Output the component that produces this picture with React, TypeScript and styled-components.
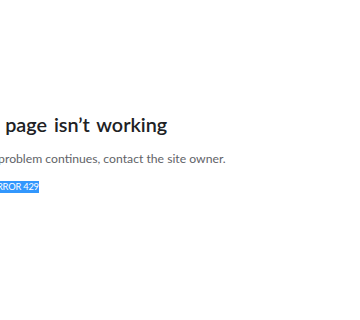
import React from "react";
import styled, { createGlobalStyle } from "styled-components";

const GlobalStyle = createGlobalStyle`
  html, body {
    margin: 0;
    padding: 0;
    background: #ffffff;
    overflow: hidden;
  }
  body {
    font-family: Lato, "Noto Sans", sans-serif;
    width: 360px;
    height: 320px;
  }
`;

const Page = styled.div`
  width: 360px;
  height: 320px;
  overflow: hidden;
  padding-top: 112px;
  box-sizing: border-box;
`;

const Content = styled.div`
  display: flex;
  flex-direction: column;
  align-items: flex-start;
  margin-left: -38px;
  width: 420px;
`;

const Title = styled.h1`
  margin: 0;
  font-size: 19.8px;
  line-height: 25px;
  font-weight: 600;
  word-spacing: 2px;
  color: #202124;
  white-space: nowrap;
`;

const Summary = styled.p`
  margin: 13px 0 0;
  padding-left: 5px;
  font-size: 12.2px;
  line-height: 18px;
  color: #5f6368;
  white-space: nowrap;
`;

const Code = styled.div`
  margin-top: 12px;
  padding-left: 5px;
  font-size: 9.3px;
  letter-spacing: -0.2px;
  line-height: 13px;
  text-transform: uppercase;
  color: #5f6368;
  white-space: nowrap;
`;

const Selected = styled.span`
  display: inline-block;
  line-height: 12px;
  background: #3297fd;
  color: #ffffff;
`;

const App = () => {
  return (
    <Page>
      <GlobalStyle />
      <Content>
        <Title>This page isn’t working</Title>
        <Summary>If the problem continues, contact the site owner.</Summary>
        <Code>
          <Selected>HTTP ERROR 429</Selected>
        </Code>
      </Content>
    </Page>
  );
};

export default App;
